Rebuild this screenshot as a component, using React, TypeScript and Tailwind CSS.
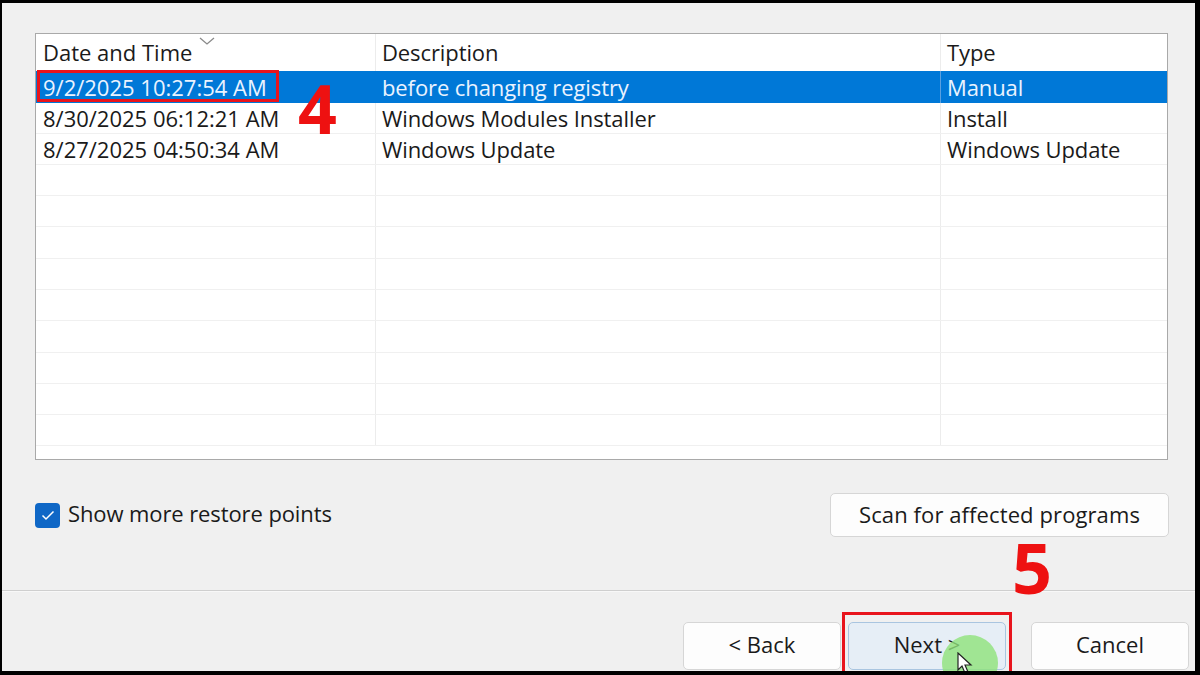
import React from "react";

const rows = [
  { d: "9/2/2025 10:27:54 AM", desc: "before changing registry", t: "Manual", sel: true },
  { d: "8/30/2025 06:12:21 AM", desc: "Windows Modules Installer", t: "Install" },
  { d: "8/27/2025 04:50:34 AM", desc: "Windows Update", t: "Windows Update" },
];

const heights = [32, 31, 31, 31, 31, 32, 31, 31, 32, 31, 31, 31];

export default function App() {
  const all = heights.map((h, i) => ({ h, r: rows[i] }));
  return (
    <div
      className="w-[1200px] h-[675px] bg-black pt-[3px] pl-[2px] pr-[5px] pb-[4px]"
      style={{ fontFamily: '"Open Sans", "Noto Sans", sans-serif' }}
    >
      <div className="relative w-full h-full bg-[#f0f0f0] flex flex-col overflow-hidden">
        {/* table */}
        <div className="ml-[33px] mt-[30px] w-[1133px] h-[427px] bg-white border border-[#a9a9a9] flex flex-col overflow-hidden">
          <div className="flex h-[37px] shrink-0 text-[22px] text-[#1a1a1a]">
            <div className="relative w-[340px] pl-[7px] pt-[2px] border-r border-[#ececec]">
              <span>Date and Time</span>
              <svg className="absolute left-[163px] top-[3px]" width="16" height="9" viewBox="0 0 16 9">
                <path d="M1 1 L8 7 L15 1" fill="none" stroke="#8a8a8a" strokeWidth="1.3" />
              </svg>
            </div>
            <div className="w-[565px] pl-[6px] pt-[2px] border-r border-[#ececec] tracking-[-0.1px]">Description</div>
            <div className="flex-1 pl-[6px] pt-[2px] tracking-[-0.1px]">Type</div>
          </div>
          {all.map(({ h, r }, i) => (
            <div
              key={i}
              className={
                "flex shrink-0 text-[22px] " +
                (r && r.sel
                  ? "bg-[#0078d7] text-[#eaf3ff]"
                  : "text-[#1a1a1a] border-b border-[#f0f0f0]")
              }
              style={{ height: h }}
            >
              <div className={"w-[340px] pl-[7px] flex items-center leading-none " + (r && r.sel ? "" : "border-r border-[#ececec]")}>
                {r ? r.d : ""}
              </div>
              <div className={"w-[565px] pl-[6px] flex items-center leading-none tracking-[-0.1px] border-r " + (r && r.sel ? "border-[#5aa0e0]" : "border-[#ececec]")}>
                {r ? r.desc : ""}
              </div>
              <div className="flex-1 pl-[6px] flex items-center leading-none tracking-[-0.1px]">{r ? r.t : ""}</div>
            </div>
          ))}
        </div>

        {/* checkbox + scan */}
        <div className="flex items-center justify-between ml-[33px] mr-[26px] mt-[33px] h-[44px]">
          <div className="flex items-center gap-[8px] text-[22px] text-[#1a1a1a]">
            <div className="w-[25px] h-[25px] rounded-[4px] bg-[#0f67c6] flex items-center justify-center">
              <svg width="14" height="11" viewBox="0 0 14 11">
                <path d="M1.5 5.5 L5 9 L12.5 1.5" fill="none" stroke="white" strokeWidth="1.5" />
              </svg>
            </div>
            <span className="-mt-[3px] tracking-[-0.1px]">Show more restore points</span>
          </div>
          <div className="w-[339px] h-[44px] pb-[2px] bg-[#fdfdfd] border border-[#d6d6d6] rounded-[5px] flex items-center justify-center text-[22px] text-[#1a1a1a] tracking-[0.1px]">
            Scan for affected programs
          </div>
        </div>

        {/* separator */}
        <div className="mt-[53px] h-[2px] bg-[#cfcfcf] border-b border-[#f8f8f8]" />

        {/* bottom buttons */}
        <div className="flex justify-end mt-[30px] pr-[6px]">
          <div className="w-[158px] h-[48px] pb-[4px] bg-[#fdfdfd] border border-[#d6d6d6] rounded-[5px] flex items-center justify-center text-[22px] text-[#1a1a1a]">
            &lt; Back
          </div>
          <div className="ml-[7px] w-[158px] h-[48px] pb-[4px] bg-[#e6eef6] border border-[#a9c5e0] rounded-[5px] flex items-center justify-center text-[22px] text-[#1a1a1a]">
            Next &gt;
          </div>
          <div className="ml-[25px] w-[158px] h-[48px] pb-[4px] bg-[#fdfdfd] border border-[#d6d6d6] rounded-[5px] flex items-center justify-center text-[22px] text-[#1a1a1a]">
            Cancel
          </div>
        </div>

        {/* annotations */}
        <div className="absolute left-[35px] top-[67px] w-[242px] h-[32px] border-[3px] border-[#e8141c]" />
        <div
          className="absolute left-[296px] top-[71px] text-[68px] font-bold text-[#ee1111] leading-none"
          style={{ fontFamily: '"Open Sans", sans-serif' }}
        >
          4
        </div>
        <div
          className="absolute left-[1010px] top-[529px] text-[70px] font-bold text-[#ee1111] leading-none"
          style={{ fontFamily: '"Open Sans", sans-serif' }}
        >
          5
        </div>
        <div className="absolute left-[940px] top-[632px] w-[56px] h-[56px] rounded-full bg-[#8ee27a] opacity-80" />
        <svg className="absolute left-[955px] top-[649px]" width="16" height="22" viewBox="0 0 16 22">
          <path d="M1 1 L1 18 L5 14 L8 21 L11 20 L8 13 L14 13 Z" fill="#fff" stroke="#222" strokeWidth="1.2" />
        </svg>
        <div className="absolute left-[840px] top-[609px] w-[170px] h-[62px] border-[3px] border-[#e8141c]" />
      </div>
    </div>
  );
}
